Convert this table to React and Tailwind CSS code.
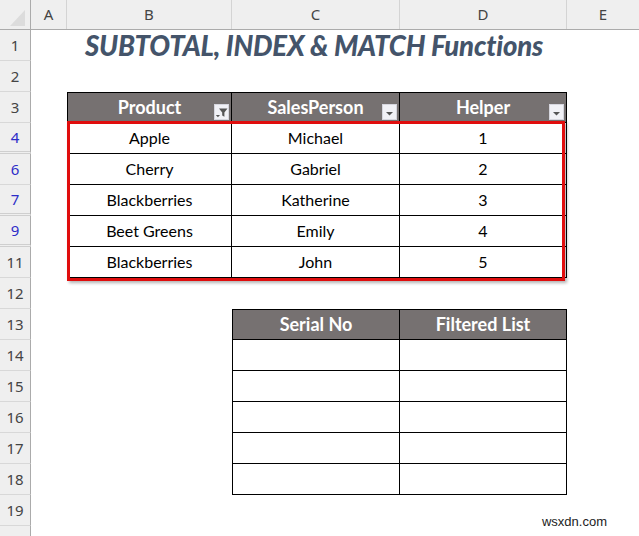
import React from "react";

const FONT = { fontFamily: "Lato, 'Open Sans', sans-serif" };
const UI = { fontFamily: "'Noto Sans', 'Open Sans', sans-serif" };

function FilterButton({ active }) {
  return (
    <div className="absolute right-[2px] bottom-[2px] w-[15px] h-[16px] bg-[#f1f1f6] border border-[#d6d6de]">
      <svg width="13" height="14" viewBox="0 0 13 14" className="block">
        {active ? (
          <>
            <path d="M4 3.5 H12.5 L9.4 7.5 V11.8 L7.2 10.6 V7.5 Z" fill="#555" />
            <path d="M0.8 10 H5 L2.9 12.2 Z" fill="#555" />
          </>
        ) : (
          <path d="M3 7 H10 L6.5 10.5 Z" fill="#555" />
        )}
      </svg>
    </div>
  );
}

function RowHead({ n, blue, double }) {
  return (
    <div
      className={`w-[31px] shrink-0 h-full flex items-center justify-center bg-[#efefef] border-r border-r-[#ababab] text-[15px] ${
        double ? "border-b-[3px] border-b-[#cfcfcf] border-double" : "border-b border-b-[#d8d8d8]"
      } ${blue ? "text-[#2d2dc8]" : "text-[#444]"}`}
      style={UI}
    >
      {n}
    </div>
  );
}

function Row({ n, blue, double, children }) {
  return (
    <div className="flex h-[31px]">
      <RowHead n={n} blue={blue} double={double} />
      {children}
    </div>
  );
}

function Cell({ w, first, head, top, children, filter }) {
  return (
    <div
      className={`${w} shrink-0 h-full relative flex items-center justify-center border-r border-b border-black ${
        first ? "border-l" : ""
      } ${top ? "border-t" : ""} ${
        head ? "bg-[#767171] text-white font-bold text-[18px]" : "bg-white text-black text-[16px]"
      }`}
      style={FONT}
    >
      {children}
      {filter !== undefined && <FilterButton active={filter} />}
    </div>
  );
}

const data = [
  { n: 4, p: "Apple", s: "Michael", h: 1, blue: true, double: true },
  { n: 6, p: "Cherry", s: "Gabriel", h: 2, blue: true },
  { n: 7, p: "Blackberries", s: "Katherine", h: 3, blue: true, double: true },
  { n: 9, p: "Beet Greens", s: "Emily", h: 4, blue: true, double: true },
  { n: 11, p: "Blackberries", s: "John", h: 5 },
];

export default function App() {
  return (
    <div className="relative w-[639px] h-[536px] overflow-hidden bg-white">
      {/* column headers */}
      <div className="flex h-[30px] bg-[#efefef] border-b border-[#ababab] text-[15px] text-[#444]" style={UI}>
        <div className="w-[31px] shrink-0 border-r border-[#ababab] flex items-end justify-end pr-[4px] pb-[3px]">
          <svg width="16" height="16" viewBox="0 0 16 16">
            <path d="M15 0 V16 H0 Z" fill="#dcdcdc" />
          </svg>
        </div>
        <div className="w-[36px] shrink-0 border-r border-[#d4d4d4] flex items-center justify-center">A</div>
        <div className="w-[165px] shrink-0 border-r border-[#d4d4d4] flex items-center justify-center">B</div>
        <div className="w-[168px] shrink-0 border-r border-[#d4d4d4] flex items-center justify-center">C</div>
        <div className="w-[167px] shrink-0 border-r border-[#d4d4d4] flex items-center justify-center">D</div>
        <div className="flex-1 flex items-center justify-center">E</div>
      </div>

      <Row n={1}>
        <div className="w-[33px] shrink-0" />
        <div
          className="w-[500px] shrink-0 flex items-center justify-center text-[27.5px] font-black italic text-[#44546a] tracking-[-0.2px]"
          style={FONT}
        >
          SUBTOTAL, INDEX &amp; MATCH Functions
        </div>
      </Row>
      <Row n={2} />

      <Row n={3}>
        <div className="w-[36px] shrink-0" />
        <Cell w="w-[165px]" first head top filter={true}>Product</Cell>
        <Cell w="w-[168px]" head top filter={false}>SalesPerson</Cell>
        <Cell w="w-[167px]" head top filter={false}>Helper</Cell>
      </Row>

      {data.map((r) => (
        <Row key={r.n} n={r.n} blue={r.blue} double={r.double}>
          <div className="w-[36px] shrink-0" />
          <Cell w="w-[165px]" first>{r.p}</Cell>
          <Cell w="w-[168px]">{r.s}</Cell>
          <Cell w="w-[167px]">{r.h}</Cell>
        </Row>
      ))}

      <Row n={12} />

      <Row n={13}>
        <div className="w-[36px] shrink-0" />
        <div className="w-[165px] shrink-0" />
        <Cell w="w-[168px]" first head top>Serial No</Cell>
        <Cell w="w-[167px]" head top>Filtered List</Cell>
      </Row>
      {[14, 15, 16, 17, 18].map((n) => (
        <Row key={n} n={n}>
          <div className="w-[36px] shrink-0" />
          <div className="w-[165px] shrink-0" />
          <Cell w="w-[168px]" first />
          <Cell w="w-[167px]" />
        </Row>
      ))}
      <Row n={19} />
      <Row n="" />

      {/* highlight box */}
      <div className="absolute left-[67px] top-[121px] w-[498px] h-[160px] border-[3px] border-[#e00d0d] shadow-[2px_2px_3px_rgba(0,0,0,0.3)]" />

      <div
        className="absolute right-[32px] bottom-[5px] text-[13px] text-[#222]"
        style={{ fontFamily: "'Liberation Sans', Arial, sans-serif" }}
      >
        wsxdn.com
      </div>
    </div>
  );
}
